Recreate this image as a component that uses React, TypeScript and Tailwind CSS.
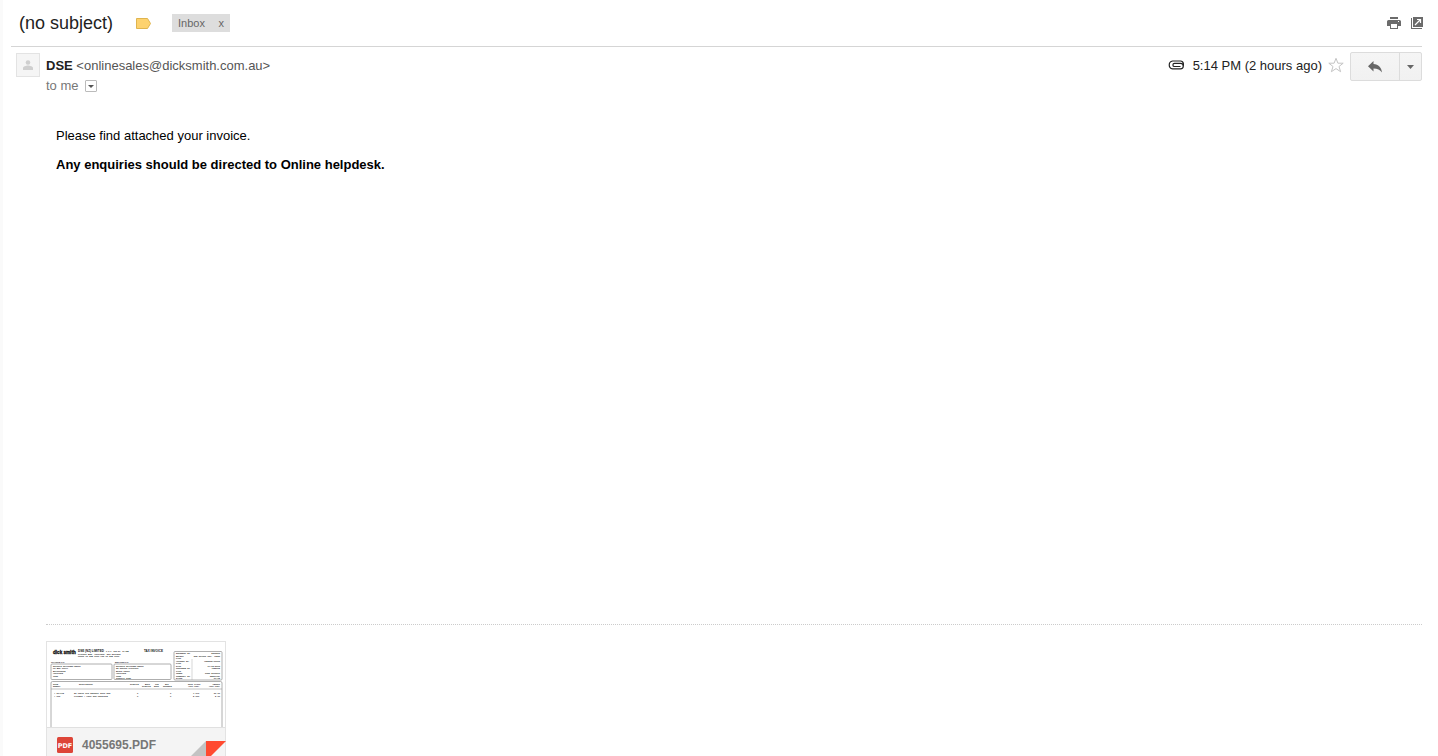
import React from 'react';

const Header: React.FC = () => (
  <header className="ml-2 mr-4 flex h-[47px] items-center border-b border-[#d5d5d5] pl-2">
    <h1 className="w-[117px] text-[18px] leading-6 text-[#222]">(no subject)</h1>
    <svg className="h-[11px] w-[15px]" viewBox="0 0 15 11" aria-hidden="true">
      <path d="M.5.5h11l3 5-3 5H.5z" fill="#fdd26e" stroke="#dfb44e" />
    </svg>
    <div className="ml-[21px] flex h-[18px] w-[58px] items-center justify-between bg-[#ddd] px-1.5 text-[11px] text-[#666]">
      <span>Inbox</span>
      <button type="button" aria-label="Remove label Inbox">x</button>
    </div>
    <div className="-mr-px ml-auto flex items-center gap-2.5">
      <button type="button" aria-label="Print all">
        <svg className="h-3 w-3.5" viewBox="0 0 14 12" fill="#6b6b6b">
          <path d="M3 0h8v2H3zM1.500 3h11A1.500 1.500 0 0 1 14 4.500V9h-3V7H3v2H0V4.500A1.500 1.500 0 0 1 1.500 3z" />
          <path fillRule="evenodd" d="M3 6h8v6H3zM4 7v4h6V7z" />
          <path d="M11 4h1v1h-1z" fill="#fff" />
        </svg>
      </button>
      <button type="button" aria-label="In new window">
        <svg className="h-3 w-3" viewBox="0 0 12 12">
          <path d="M0 1h1v10h10v1H0zM2 0h10v10H2z" fill="#6b6b6b" />
          <path d="M4 8l5-5M6 2.500h3.500V6" fill="none" stroke="#fff" strokeWidth="1.200" />
        </svg>
      </button>
    </div>
  </header>
);

const MessageHeader: React.FC = () => (
  <div className="mr-4 ml-[13px] flex items-start pt-[5px]">
    <div className="mt-px flex size-6 items-center justify-center border border-[#e3e3e3] bg-[#f5f5f5]">
      <svg className="size-2.5" viewBox="0 0 10 10" fill="#cfcfcf" aria-hidden="true">
        <circle cx="5" cy="2.500" r="2.300" />
        <path d="M0 10V8c0-1.500 3-2.500 5-2.500s5 1 5 2.500v2z" />
      </svg>
    </div>
    <div className="ml-1.5 pt-1 text-[13px] leading-5">
      <p className="text-[#555]">
        <span className="font-bold text-[#222]">DSE</span> &lt;onlinesales@dicksmith.com.au&gt;
      </p>
      <div className="flex items-center gap-1.5 text-[#777]">
        to me
        <button type="button" aria-label="Show details" className="flex size-3 items-center justify-center rounded-[1px] border border-[#bbb]">
          <svg className="h-[3px] w-1.5" viewBox="0 0 6 3"><path d="M0 0h6L3 3z" fill="#555" /></svg>
        </button>
      </div>
    </div>
    <div className="ml-auto flex items-start">
      <div className="flex items-start pt-1">
        <svg className="mt-1 h-2.5 w-4" viewBox="0 0 16 10" fill="none" stroke="#222" strokeWidth="1.200" aria-label="Attachment">
          <path d="M12.500 6.500H6.500a1.500 1.500 0 0 1 0-3.200H12.500a2.600 2.600 0 0 1 0 5.600H4.600a4 4 0 0 1 0-7.900H12" />
          <path d="M12 1h.5a3 3 0 0 1 2.900 3.200v1.600" />
        </svg>
        <span className="ml-[9px] text-[13px] leading-5 text-[#222]">5:14 PM (2 hours ago)</span>
        <button type="button" aria-label="Star" className="mt-px ml-1.5">
          <svg className="size-4" viewBox="0 0 16 16" fill="none" stroke="#c4c4c4">
            <path d="M8 1.300l1.900 4.900h5.300l-4.200 3.300 1.600 5.200L8 11.600l-4.600 3.100L5 9.500.8 6.200h5.300z" />
          </svg>
        </button>
      </div>
      <div className="ml-1.5 flex h-[29px] rounded-[2px] border border-[#dcdcdc] bg-linear-to-b from-[#f5f5f5] to-[#f1f1f1]">
        <button type="button" aria-label="Reply" className="flex w-12 items-center justify-center">
          <svg className="h-3 w-3.5" viewBox="0 0 14 12" fill="#666"><path d="M5.500 0v3c5 .3 8 3.500 8.500 8.500C12 8.700 9.500 7.500 5.500 7.500v3L0 5.200z" /></svg>
        </button>
        <button type="button" aria-label="More" className="flex w-[22px] items-center justify-center border-l border-[#dcdcdc]">
          <svg className="h-1 w-[7px]" viewBox="0 0 7 4"><path d="M0 0h7L3.500 4z" fill="#666" /></svg>
        </button>
      </div>
    </div>
  </div>
);

/* First page of the invoice, shown as the attachment preview */
const InvoicePreview: React.FC = () => (
  <svg className="block h-[85px] w-full bg-white" viewBox="0 0 178 85" fontFamily="Liberation Mono, monospace" fontSize="2.100" fontWeight="bold" fill="#111">
    <g fontFamily="Liberation Sans, sans-serif">
      <text x="6" y="12" fontSize="4.600" stroke="#111" strokeWidth=".3">dick smith</text>
      <text x="31" y="10" fontSize="3">DSE (NZ) LIMITED</text>
      <text x="97" y="10" fontSize="3">TAX INVOICE</text>
      <text x="4" y="21" fontSize="2.200">CHARGE TO:</text>
      <text x="68" y="21" fontSize="2.200">DELIVER TO:</text>
    </g>
    <text x="59" y="10" fontSize="1.800">G.S.T. Reg No. 10-668</text>
    <text x="31" y="12.500">Private Bag, Auckland, New Zealand</text>
    <text x="31" y="14.900">Phone 09 555 0100 Fax 09 555 0101</text>
    <g fill="none" stroke="#999" strokeWidth=".8">
      <rect x="4" y="22" width="61" height="15.500" rx="1" />
      <rect x="67" y="22" width="57" height="15.500" rx="1" />
      <rect x="127" y="9.500" width="48" height="28.500" rx="1" />
      <path d="M145 17v21" strokeWidth=".4" />
      <path d="M4 86V41q0-1.500 1.500-1.500h168q1.500 0 1.500 1.500v45" />
      <path d="M4 47h171" strokeWidth=".6" />
    </g>
    <text x="6" y="24.700">Richard Williams-Smith</text>
    <text x="6" y="27.200">PO BOX 00977</text>
    <text x="6" y="29.700">Birkenhead</text>
    <text x="6" y="32.200">Auckland</text>
    <text x="6" y="34.700">0626</text>
    <text x="69" y="24.700">Richard Williams-Smith</text>
    <text x="69" y="27.200">22 Mokoia Crescent</text>
    <text x="69" y="29.700">Beach Haven</text>
    <text x="69" y="32.200">Auckland</text>
    <text x="69" y="34.700">0626</text>
    <text x="69" y="37.200">Country Code</text>
    {['DOCUMENT NO.', 'BRANCH', 'PAGE', 'ACCOUNT No.', 'PAGE', 'DATE', 'CUSTOMER No.', 'TYPE', 'TERMS', 'CURRENCY No.', 'DATED'].map((label, i) => (
      <text key={i} x="129" y={12 + i * 2.5}>{label}</text>
    ))}
    <g textAnchor="end">
      <text x="173" y="12">INVOICE</text>
      <text x="173" y="14.500">DSE Online Sal, 40556</text>
      <text x="173" y="19.500">4055695/00016</text>
      <text x="173" y="24.500">17/12/2013</text>
      <text x="173" y="27">4055695</text>
      <text x="173" y="32">Cash Invoice</text>
      <text x="173" y="34.500">NZDollar</text>
      <text x="173" y="37">17/12</text>
    </g>
    <text x="6" y="42.500">Item</text>
    <text x="6" y="45">Number</text>
    <text x="32" y="42.500">Description</text>
    <text x="83" y="42.500">Ordered</text>
    <text x="98" y="42.500">Back</text>
    <text x="95" y="45">Ordered</text>
    <text x="108" y="42.500">Tax</text>
    <text x="107" y="45">Rate</text>
    <text x="118" y="42.500">Qty</text>
    <text x="116" y="45">Shipped</text>
    <text x="141" y="42.500">Unit Price</text>
    <text x="141" y="45">(inc-Tax)</text>
    <g textAnchor="end">
      <text x="173" y="42.500">Amount</text>
      <text x="173" y="45">(inc-Tax)</text>
      <text x="173" y="52">31.90</text>
      <text x="173" y="54.700">5.90</text>
    </g>
    <text x="7" y="52">* XH4775</text>
    <text x="27" y="52">2X Table GPS Speaker Dock 20W</text>
    <text x="7" y="54.700">* 906</text>
    <text x="27" y="54.700">Freight / Pack and Handling</text>
    <text x="90" y="52">1</text>
    <text x="90" y="54.700">1</text>
    <text x="123" y="52">1</text>
    <text x="123" y="54.700">1</text>
    <text x="146" y="52">7.970</text>
    <text x="146" y="54.700">5.900</text>
  </svg>
);

const Attachment: React.FC = () => (
  <a href="#invoice" className="relative block h-[120px] w-[180px] border border-[#e3e3e3] bg-[#f4f4f4]">
    <InvoicePreview />
    <div className="flex h-[34px] items-center gap-[9px] border-t border-[#e0e0e0] pl-2.5">
      <svg className="size-4" viewBox="0 0 16 16" aria-hidden="true">
        <rect width="16" height="16" rx="1.500" fill="#dd4538" />
        <text x="8" y="10.500" textAnchor="middle" fontFamily="DejaVu Sans, sans-serif" fontWeight="bold" fontSize="6.500" fill="#fff">PDF</text>
      </svg>
      <span className="text-[12px] font-bold text-[#777]">4055695.PDF</span>
    </div>
    <svg className="absolute -right-px -bottom-px h-5 w-10" viewBox="0 0 40 20" aria-hidden="true">
      <path d="M20 0v20H0z" fill="#c3c3c3" />
      <path d="M20 0h20L20 20z" fill="#ff4a30" />
    </svg>
  </a>
);

export default function App() {
  return (
    <div className="flex h-screen overflow-hidden bg-white font-['Liberation_Sans',Arial,sans-serif]">
      <div className="w-[3px] shrink-0 bg-[#fafafa]" />
      <main className="min-w-0 flex-1">
        <Header />
        <MessageHeader />
        <article className="min-h-[528px] pt-[30px] pl-[53px] text-[13px] leading-5 text-black">
          <p>Please find attached your invoice.</p>
          <p className="mt-[9px] font-bold">Any enquiries should be directed to Online helpdesk.</p>
        </article>
        <section className="mr-4 ml-[43px] border-t border-dotted border-[#ccc] pt-4">
          <Attachment />
        </section>
      </main>
    </div>
  );
}
